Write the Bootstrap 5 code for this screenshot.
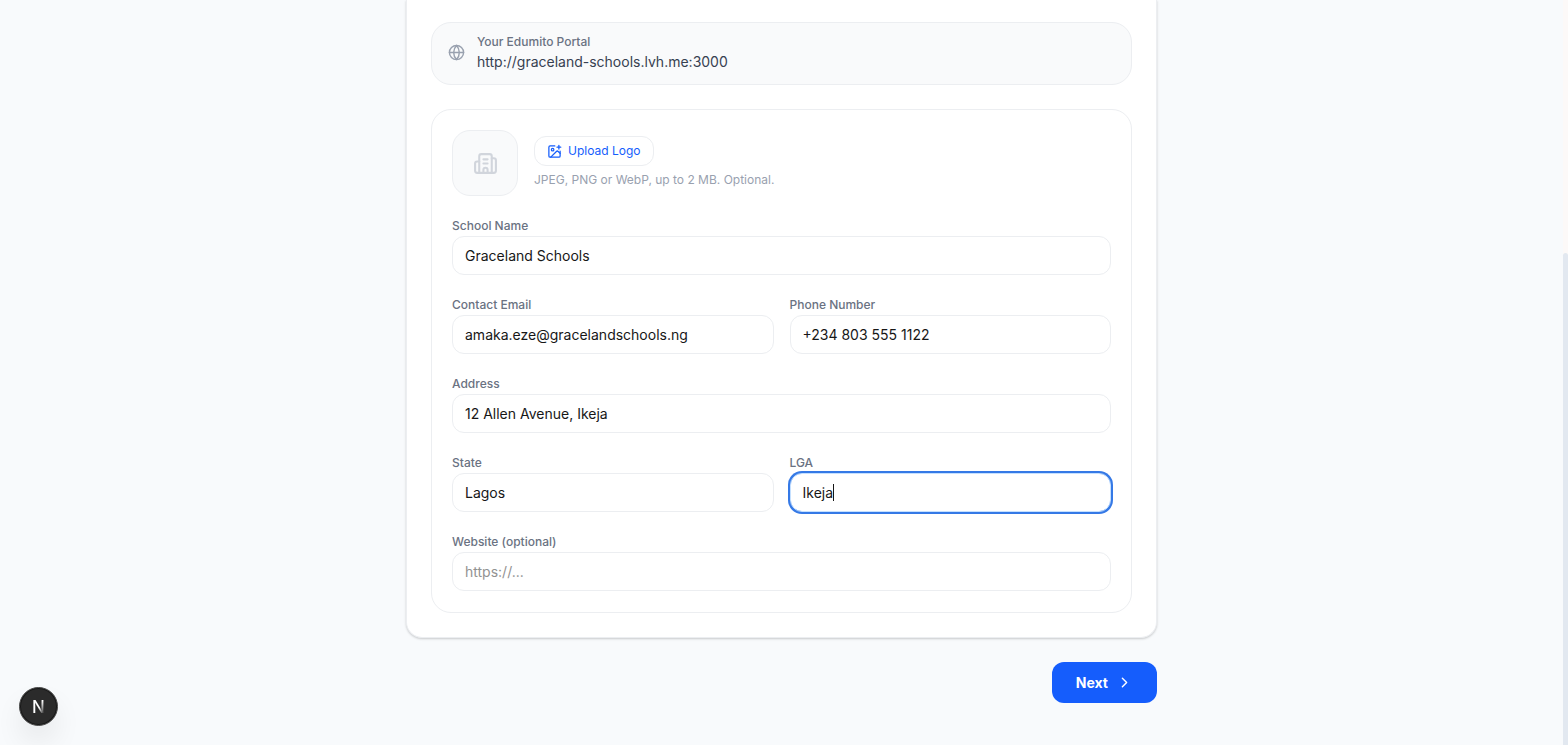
<!DOCTYPE html>
<html lang="en">
<head>
<meta charset="utf-8">
<meta name="viewport" content="width=device-width, initial-scale=1">
<title>School profile</title>
<link href="https://cdn.jsdelivr.net/npm/bootstrap@5.3.0/dist/css/bootstrap.min.css" rel="stylesheet">
<style>
  body { font-family: Inter, sans-serif; font-size: 14px; line-height: 20px; background: #f8fafc; color: #171717; }
  .page-column { max-width: 751px; }
  .sheet { background: #fff; border: 1px solid #eceef1; border-top: 0; border-radius: 0 0 16px 16px; padding: 22px 24px 24px; box-shadow: 0 1px 3px rgba(0,0,0,.1), 0 1px 2px rgba(0,0,0,.1); }
  .panel { border: 1px solid #eceef1; border-radius: 20px; }
  .portal { background: #f9fafb; padding: 9px 16px 12px; color: #374151; }
  .profile { padding: 20px 20px 21px; }
  .logo-slot { width: 66px; height: 66px; border: 1px solid #eceef1; border-radius: 18px; background: #f9fafb; color: #d1d5dc; }
  .field-label { font-size: 12px; font-weight: 500; line-height: 20px; color: #6a7282; }
  .hint { font-size: 12px; color: #99a1af; }
  .field-grid { row-gap: 20px; column-gap: 16px; }
  .field-grid .form-control { height: 39px; padding: 0 12px; font-size: 14px; line-height: 20px; color: #171717; border-color: #eceef1; border-radius: 12px; }
  .field-grid .form-control::placeholder { color: #929292; }
  .field-grid .form-control:focus, .field-grid .form-control.active { border-color: #c5e0ff; box-shadow: 0 0 0 2px #3579e6; }
  .caret { left: 43px; top: 11px; width: 1px; height: 17px; background: #171717; }
  .btn-upload { height: 30px; padding: 0 12px; gap: 6px; font-size: 12px; line-height: 20px; border: 1px solid #eceef1; border-radius: 12px; color: #155dfc; background: #fff; }
  .btn-next { height: 41px; padding: 0 24px; gap: 8px; font-size: 14px; font-weight: 700; border: 0; border-radius: 12px; color: #fff; background: #155dfc; }
  .btn-next:hover { color: #fff; background: #1447e6; }
  .half { width: calc(50% - 8px); }
  .dev-badge { left: 19px; bottom: 19px; width: 39px; height: 39px; border: 1px solid #4a4a4a; background: #2b2b2b; box-shadow: 0 0 0 1px #171717 inset, 0 16px 32px -8px rgba(0,0,0,.2); }
  .dev-badge span { font-size: 17px; font-weight: 500; line-height: 20px; background: linear-gradient(115deg, #fff 55%, #555 80%); -webkit-background-clip: text; background-clip: text; color: transparent; }
  .scroll-rail { width: 5px; background: #fcf9f8; }
  .scroll-thumb { height: 66%; background: #e2e8f0; border-radius: 3px 3px 0 0; }
</style>
</head>
<body>
<div class="d-flex min-vh-100">
  <main class="flex-grow-1">
    <form class="page-column mx-auto">
      <div class="sheet">
        <div class="panel portal d-flex align-items-center mb-4">
          <svg class="flex-shrink-0" width="17" height="17" viewBox="0 0 24 24" fill="none" stroke="#99a1af" stroke-width="2" stroke-linecap="round" stroke-linejoin="round" aria-hidden="true"><circle cx="12" cy="12" r="10"/><path d="M12 2a14.5 14.5 0 0 0 0 20 14.5 14.5 0 0 0 0-20M2 12h20"/></svg>
          <div class="ms-2 ps-1">
            <div class="field-label">Your Edumito Portal</div>
            <div>http://graceland-schools.lvh.me:3000</div>
          </div>
        </div>

        <div class="panel profile">
          <div class="d-flex align-items-center gap-3 mb-3 pb-1">
            <div class="logo-slot d-flex align-items-center justify-content-center flex-shrink-0">
              <svg width="25" height="25" viewBox="0 0 24 24" fill="none" stroke="currentColor" stroke-width="2" stroke-linecap="round" stroke-linejoin="round" aria-hidden="true"><path d="M10 12h4M10 8h4M14 21v-3a2 2 0 0 0-4 0v3"/><path d="M6 10H4a2 2 0 0 0-2 2v7a2 2 0 0 0 2 2h16a2 2 0 0 0 2-2V9a2 2 0 0 0-2-2h-2"/><path d="M6 21V5a2 2 0 0 1 2-2h8a2 2 0 0 1 2 2v16"/></svg>
            </div>
            <div>
              <button type="button" class="btn btn-upload d-flex align-items-center mb-1">
                <svg width="15" height="15" viewBox="0 0 24 24" fill="none" stroke="currentColor" stroke-width="2" stroke-linecap="round" stroke-linejoin="round" aria-hidden="true"><path d="M16 5h6M19 2v6"/><path d="M21 11.5V19a2 2 0 0 1-2 2H5a2 2 0 0 1-2-2V5a2 2 0 0 1 2-2h7.5"/><path d="m21 15-3.086-3.086a2 2 0 0 0-2.828 0L6 21"/><circle cx="9" cy="9" r="2"/></svg>
                Upload Logo
              </button>
              <div class="hint">JPEG, PNG or WebP, up to 2 MB. Optional.</div>
            </div>
          </div>

          <div class="field-grid d-flex flex-wrap">
            <div class="w-100">
              <label class="field-label d-block" for="school">School Name</label>
              <input class="form-control" id="school" type="text" value="Graceland Schools">
            </div>
            <div class="half">
              <label class="field-label d-block" for="email">Contact Email</label>
              <input class="form-control" id="email" type="email" value="amaka.eze@gracelandschools.ng">
            </div>
            <div class="half">
              <label class="field-label d-block" for="phone">Phone Number</label>
              <input class="form-control" id="phone" type="tel" value="+234 803 555 1122">
            </div>
            <div class="w-100">
              <label class="field-label d-block" for="address">Address</label>
              <input class="form-control" id="address" type="text" value="12 Allen Avenue, Ikeja">
            </div>
            <div class="half">
              <label class="field-label d-block" for="state">State</label>
              <input class="form-control" id="state" type="text" value="Lagos">
            </div>
            <div class="half">
              <label class="field-label d-block" for="lga">LGA</label>
              <div class="position-relative">
                <input class="form-control active" id="lga" type="text" value="Ikeja">
                <span class="caret position-absolute" aria-hidden="true"></span>
              </div>
            </div>
            <div class="w-100">
              <label class="field-label d-block" for="website">Website (optional)</label>
              <input class="form-control" id="website" type="url" placeholder="https://...">
            </div>
          </div>
        </div>
      </div>

      <div class="d-flex justify-content-end pt-4">
        <button type="submit" class="btn btn-next d-flex align-items-center">
          Next
          <svg width="17" height="17" viewBox="0 0 24 24" fill="none" stroke="currentColor" stroke-width="2" stroke-linecap="round" stroke-linejoin="round" aria-hidden="true"><path d="m9 18 6-6-6-6"/></svg>
        </button>
      </div>
    </form>
  </main>
  <div class="scroll-rail d-flex flex-column justify-content-end flex-shrink-0" aria-hidden="true"><div class="scroll-thumb"></div></div>
</div>
<button type="button" class="dev-badge position-fixed rounded-circle p-0 d-flex align-items-center justify-content-center" aria-label="Open developer tools"><span>N</span></button>
<script src="https://cdn.jsdelivr.net/npm/bootstrap@5.3.0/dist/js/bootstrap.bundle.min.js"></script>
</body>
</html>
